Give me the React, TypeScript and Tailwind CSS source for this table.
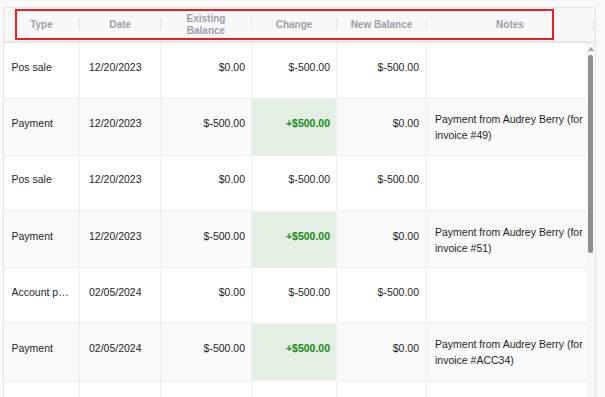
import React from 'react';

interface LedgerRow {
  type: string;
  date: string;
  existing: string;
  change: string;
  newBalance: string;
  notes: string;
}

const rows: LedgerRow[] = [
  { type: 'Pos sale', date: '12/20/2023', existing: '$0.00', change: '$-500.00', newBalance: '$-500.00', notes: '' },
  { type: 'Payment', date: '12/20/2023', existing: '$-500.00', change: '+$500.00', newBalance: '$0.00', notes: 'Payment from Audrey Berry (for invoice #49)' },
  { type: 'Pos sale', date: '12/20/2023', existing: '$0.00', change: '$-500.00', newBalance: '$-500.00', notes: '' },
  { type: 'Payment', date: '12/20/2023', existing: '$-500.00', change: '+$500.00', newBalance: '$0.00', notes: 'Payment from Audrey Berry (for invoice #51)' },
  { type: 'Account payment', date: '02/05/2024', existing: '$0.00', change: '$-500.00', newBalance: '$-500.00', notes: '' },
  { type: 'Payment', date: '02/05/2024', existing: '$-500.00', change: '+$500.00', newBalance: '$0.00', notes: 'Payment from Audrey Berry (for invoice #ACC34)' },
  // next row is only peeking in at the bottom edge
  { type: '', date: '', existing: '', change: '', newBalance: '', notes: '' },
];

const HeaderCell: React.FC<{ width: string; children: React.ReactNode }> = ({ width, children }) => (
  <div className={`flex items-center ${width}`}>
    <div className="flex-1 text-center leading-[12px]">{children}</div>
    <div className="w-px h-[11px] bg-[#dfe2e7]" />
  </div>
);

export default function App() {
  return (
    <div
      className="relative w-[605px] h-[397px] overflow-hidden bg-[#f9f9f9] pt-[7px] pl-[3px]"
      style={{ fontFamily: '"Liberation Sans", Arial, sans-serif' }}
    >
      <div className="w-[593px] h-[400px] border border-[#e4e4e4] bg-white flex flex-col">
        {/* header */}
        <div className="flex h-[35px] shrink-0 bg-[#f8f8f8] border-b-2 border-[#e6e6e6] text-[10px] font-bold text-[#9ca0a9]">
          <HeaderCell width="w-[76px]">Type</HeaderCell>
          <HeaderCell width="w-[81px]">Date</HeaderCell>
          <HeaderCell width="w-[91px]">Existing<br />Balance</HeaderCell>
          <HeaderCell width="w-[85px]">Change</HeaderCell>
          <HeaderCell width="w-[90px]">New Balance</HeaderCell>
          <HeaderCell width="w-[167px]">Notes</HeaderCell>
        </div>

        {/* body */}
        <div className="flex flex-1 min-h-0">
          <div className="w-[582px] text-[10.5px] text-[#1f1f1f]">
            {rows.map((r, i) => {
              const even = i % 2 === 1;
              const positive = r.change.startsWith('+');
              return (
                <div
                  key={i}
                  className={`flex h-[56.3px] border-b border-[#ececec] ${even ? 'bg-[#fafafa]' : 'bg-white'}`}
                >
                  <div className="w-[76px] flex items-center pl-[7.5px] pr-[10px] pb-[6px] border-r border-[#efefef] min-w-0">
                    <span className="truncate">{r.type}</span>
                  </div>
                  <div className="w-[81px] flex items-center pl-[9px] pb-[6px] border-r border-[#efefef]">
                    {r.date}
                  </div>
                  <div className="w-[91px] flex items-center justify-end pr-[6px] pb-[6px] border-r border-[#efefef]">
                    {r.existing}
                  </div>
                  <div
                    className={`w-[85px] flex items-center justify-end pr-[6px] pb-[6px] border-r border-[#efefef] ${
                      positive ? 'bg-[#e3efe2] rounded-[3px] text-[#178a17] font-bold' : ''
                    }`}
                  >
                    {r.change}
                  </div>
                  <div className="w-[90px] flex items-center justify-end pr-[7px] pb-[6px] border-r border-[#efefef]">
                    {r.newBalance}
                  </div>
                  <div className="flex-1 flex items-center pl-[8px] pr-[1px] leading-[16px]">
                    {r.notes}
                  </div>
                </div>
              );
            })}
          </div>

          {/* scrollbar */}
          <div className="w-[9px] bg-[#f7f7f7] flex flex-col items-center pt-[4px]">
            <div className="w-0 h-0 border-l-[3px] border-r-[3px] border-b-[4px] border-l-transparent border-r-transparent border-b-[#a3a3a3]" />
            <div className="mt-[4px] w-[5px] h-[198px] rounded-full bg-[#8e8e8e]" />
          </div>
        </div>
      </div>

      {/* annotation box */}
      <div className="absolute left-[15px] top-[9px] w-[539px] h-[31px] border-2 border-[#ec1c24] pointer-events-none" />
    </div>
  );
}
